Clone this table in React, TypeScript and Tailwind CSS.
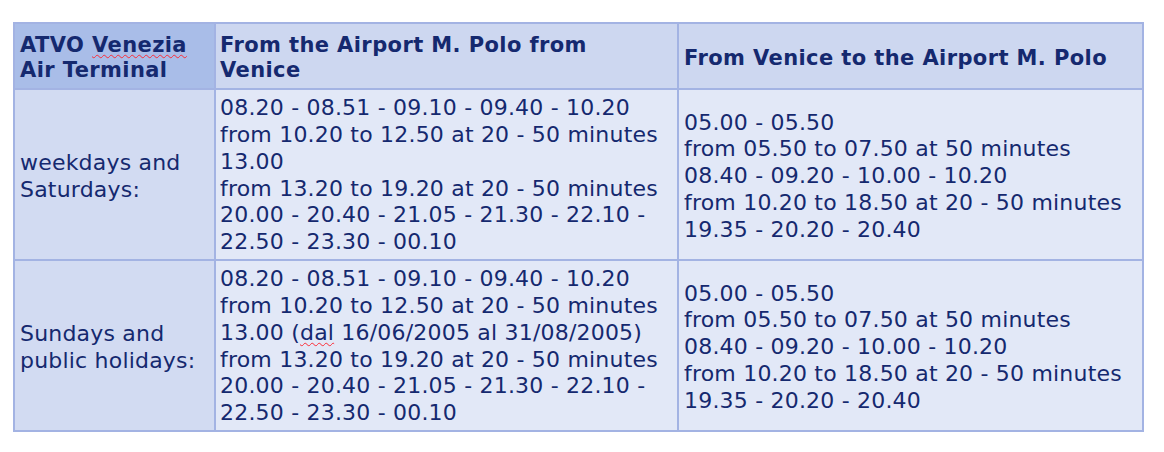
const fromAirport = {
  weekdays: [
    "08.20 - 08.51 - 09.10 - 09.40 - 10.20",
    "from 10.20 to 12.50 at 20 - 50 minutes",
    "13.00",
    "from 13.20 to 19.20 at 20 - 50 minutes",
    "20.00 - 20.40 - 21.05 - 21.30 - 22.10 -",
    "22.50 - 23.30 - 00.10",
  ],
};

const toAirport = [
  "05.00 - 05.50",
  "from 05.50 to 07.50 at 50 minutes",
  "08.40 - 09.20 - 10.00 - 10.20",
  "from 10.20 to 18.50 at 20 - 50 minutes",
  "19.35 - 20.20 - 20.40",
];

function Lines({ lines }: { lines: React.ReactNode[] }) {
  return (
    <>
      {lines.map((l, i) => (
        <div key={i} className="whitespace-nowrap">
          {l}
        </div>
      ))}
    </>
  );
}

const squiggle = "underline decoration-wavy decoration-red-500 decoration-1 underline-offset-2";

export default function App() {
  const sundays: React.ReactNode[] = [
    "08.20 - 08.51 - 09.10 - 09.40 - 10.20",
    "from 10.20 to 12.50 at 20 - 50 minutes",
    <>
      13.00 (<span className={squiggle}>dal</span> 16/06/2005 al 31/08/2005)
    </>,
    "from 13.20 to 19.20 at 20 - 50 minutes",
    "20.00 - 20.40 - 21.05 - 21.30 - 22.10 -",
    "22.50 - 23.30 - 00.10",
  ];

  return (
    <div className="w-[1164px] h-[452px] bg-white pt-[22px] pl-[13px] font-['DejaVu_Sans',Verdana,sans-serif] text-[#15296f]">
      <table className="border-collapse border-2 border-[#a3b3e3] w-[1129px] table-fixed">
        <colgroup>
          <col className="w-[201px]" />
          <col className="w-[463px]" />
          <col className="w-[465px]" />
        </colgroup>
        <thead>
          <tr className="h-[66px] text-[21px] font-bold leading-[25px] text-left tracking-[0.4px]">
            <th className="border-2 border-[#a3b3e3] bg-[#a9bde8] px-[5px] pt-[4px] align-middle">
              ATVO <span className={squiggle}>Venezia</span>
              <br />
              Air Terminal
            </th>
            <th className="border-2 border-[#a3b3e3] bg-[#cdd7f0] px-[4px] pt-[4px] align-middle">
              From the Airport M. Polo from
              <br />
              Venice
            </th>
            <th className="border-2 border-[#a3b3e3] bg-[#cdd7f0] px-[5px] pt-[4px] align-middle">
              From Venice to the Airport M. Polo
            </th>
          </tr>
        </thead>
        <tbody className="text-[22px] leading-[26.8px] tracking-[0.2px]">
          <tr className="h-[171px]">
            <td className="border-2 border-[#a3b3e3] bg-[#d2dbf2] px-[5px] pt-[4px] align-middle">
              weekdays and
              <br />
              Saturdays:
            </td>
            <td className="border-2 border-[#a3b3e3] bg-[#e2e8f7] px-[4px] pt-[2px] align-middle">
              <Lines lines={fromAirport.weekdays} />
            </td>
            <td className="border-2 border-[#a3b3e3] bg-[#e2e8f7] px-[5px] pt-[4px] align-middle">
              <Lines lines={toAirport} />
            </td>
          </tr>
          <tr className="h-[171px]">
            <td className="border-2 border-[#a3b3e3] bg-[#d2dbf2] px-[5px] pt-[4px] align-middle">
              Sundays and
              <br />
              public holidays:
            </td>
            <td className="border-2 border-[#a3b3e3] bg-[#e2e8f7] px-[4px] pt-[2px] align-middle">
              <Lines lines={sundays} />
            </td>
            <td className="border-2 border-[#a3b3e3] bg-[#e2e8f7] px-[5px] pt-[4px] align-middle">
              <Lines lines={toAirport} />
            </td>
          </tr>
        </tbody>
      </table>
    </div>
  );
}
